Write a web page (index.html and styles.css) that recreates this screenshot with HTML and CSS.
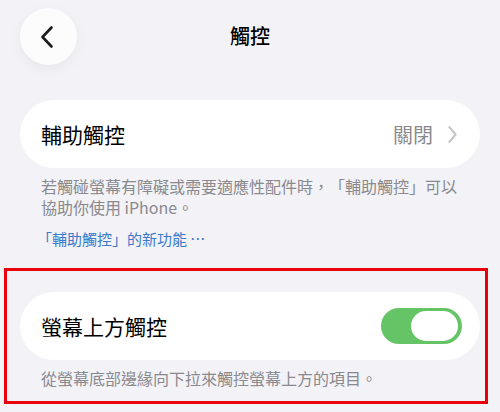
FILE: index.html
```html
<!DOCTYPE html>
<html lang="zh-Hant">
<head>
<meta charset="utf-8">
<link rel="stylesheet" href="styles.css">
</head>
<body>
<div class="screen">
  <header class="nav">
    <button class="back" aria-label="返回">
      <svg width="16" height="24" viewBox="0 0 16 24"><path d="M12.5 2.5 L3.5 12 L12.5 21.5" fill="none" stroke="#1c1c1e" stroke-width="2.6" stroke-linecap="round" stroke-linejoin="round"/></svg>
    </button>
    <h1 class="title">觸控</h1>
  </header>

  <section class="group first">
    <div class="card">
      <span class="label">輔助觸控</span>
      <span class="value">關閉
        <svg class="chev" width="10" height="18" viewBox="0 0 10 18"><path d="M2 2 L8 9 L2 16" fill="none" stroke="#c4c4c8" stroke-width="2" stroke-linecap="round" stroke-linejoin="round"/></svg>
      </span>
    </div>
    <p class="note">若觸碰螢幕有障礙或需要適應性配件時，「輔助觸控」可以<br>協助你使用 iPhone。</p>
    <p class="link">「輔助觸控」的新功能 ⋯</p>
  </section>

  <section class="highlight">
    <div class="card">
      <span class="label">螢幕上方觸控</span>
      <span class="toggle"><span class="knob"></span></span>
    </div>
    <p class="note">從螢幕底部邊緣向下拉來觸控螢幕上方的項目。</p>
  </section>
</div>
</body>
</html>
```

FILE: styles.css
```css
* { box-sizing: border-box; }
html, body {
  margin: 0;
  padding: 0;
  background: #f2f2f7;
}
body {
  font-family: "Noto Sans CJK TC", "Noto Sans", sans-serif;
  color: #000;
  width: 500px;
  height: 412px;
  overflow: hidden;
  text-spacing-trim: space-all;
}
.screen {
  display: flex;
  flex-direction: column;
}
.nav {
  position: relative;
  height: 72px;
  display: flex;
  align-items: flex-start;
  justify-content: center;
}
.back {
  position: absolute;
  left: 20px;
  top: 8px;
  width: 57px;
  height: 57px;
  border-radius: 50%;
  border: none;
  background: #fcfcfd;
  box-shadow: 0 4px 14px rgba(0,0,0,0.05);
  display: flex;
  align-items: center;
  justify-content: center;
  padding: 0 4px 0 0;
}
.title {
  margin: 0;
  font-size: 20px;
  font-weight: 500;
  line-height: 72px;
  height: 72px;
}
.group.first {
  margin-top: 28px;
  padding: 0 20px;
}
.card {
  height: 68px;
  background: #fff;
  border-radius: 34px;
  display: flex;
  align-items: center;
  justify-content: space-between;
  padding: 0 18px 0 21px;
}
.label {
  font-size: 21px;
  line-height: 1;
}
.value {
  display: flex;
  align-items: center;
  gap: 14px;
  font-size: 20px;
  color: #8a8a8e;
  padding-right: 4px;
}
.chev { width: 11px; height: 19px; }
.note {
  margin: 8px 0 0;
  padding-left: 21px;
  font-size: 16px;
  line-height: 21px;
  color: #8a8a8e;
}
.link {
  margin: 10px 0 0;
  padding-left: 17px;
  font-size: 15px;
  line-height: 21px;
  color: #3a7acb;
}
.highlight {
  margin: 19px 0 0 4px;
  width: 484px;
  border: 3px solid #e8000d;
  padding: 21px 0 12px 13px;
}
.highlight .card {
  width: 460px;
}
.toggle {
  width: 81px;
  height: 36px;
  border-radius: 18px;
  background: #65c466;
  display: flex;
  align-items: center;
  justify-content: flex-end;
  padding-right: 4px;
}
.knob {
  width: 47px;
  height: 30px;
  border-radius: 15px;
  background: #fff;
}
```
